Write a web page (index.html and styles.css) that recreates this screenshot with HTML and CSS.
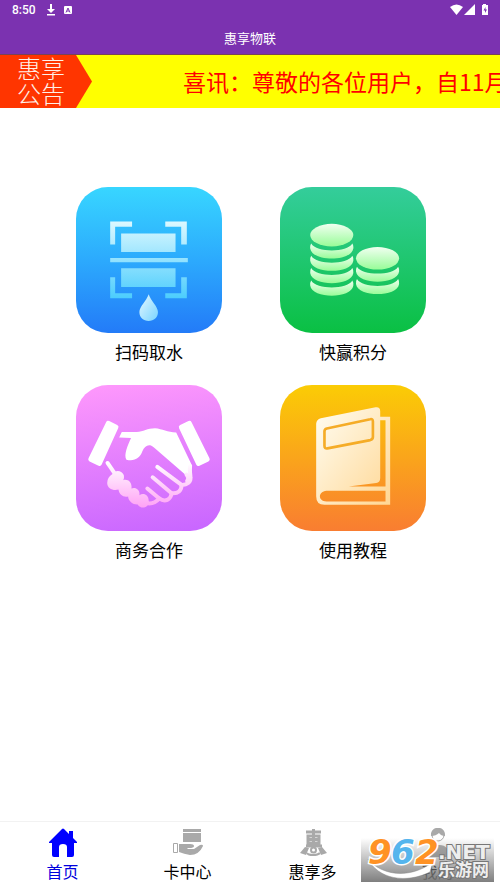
FILE: index.html
```html
<!DOCTYPE html>
<html lang="zh-CN">
<head>
  <meta charset="UTF-8" />
  <meta name="viewport" content="width=device-width, initial-scale=1.0" />
  <title>惠享物联</title>
  <link rel="stylesheet" href="styles.css">
</head>
<body>
  <header class="header">
    <div class="status-bar">
      <span class="clock">8:50</span>
      <svg class="status-icon" width="10" height="12" viewBox="0 0 10 12"><path d="M4 0h2v5h3L5 9 1 5h3zM1 10h8v1.500H1z" fill="#fff"/></svg>
      <svg class="status-icon" width="8" height="12" viewBox="0 0 8 12"><rect y="2" width="8" height="8" rx="1" fill="#fff"/><path d="M2 8.500L4 4l2 4.500M3 7h2" stroke="#7b32b0" fill="none"/></svg>
      <span class="spacer"></span>
      <svg width="38" height="12" viewBox="0 0 38 12" fill="#fff">
        <path d="M0 3Q6.500-2 13 3L6.500 11z"/>
        <path d="M25 0v11H14z"/>
        <path d="M33 0h3v1h2v10h-6V1h1z"/>
        <path d="M35.500 3L33.500 6.500h1.500V9l2-3.500h-1.500z" fill="#7b32b0"/>
      </svg>
    </div>
    <h1>惠享物联</h1>
  </header>

  <div class="notice">
    <div class="notice-tag">惠享<br>公告</div>
    <div class="notice-text">喜讯：尊敬的各位用户，自11月</div>
  </div>

  <main class="menu">
    <a class="menu-item" href="#scan">
      <svg class="tile blue" viewBox="17 19 440 440">
        <defs>
          <linearGradient id="scan" gradientUnits="userSpaceOnUse" x1="0" y1="123" x2="0" y2="354">
            <stop offset="0" stop-color="#dcf8ff"/><stop offset="1" stop-color="#4ccdfd"/>
          </linearGradient>
          <linearGradient id="drop" x1="0" y1="0" x2="1" y2="1">
            <stop offset="0" stop-color="#e6f8ff"/><stop offset="1" stop-color="#78d4ff"/>
          </linearGradient>
        </defs>
        <path fill="url(#scan)" d="M120 123h66v16h-51v53h-15zM286 123h65v69h-17v-53h-48zM120 291h15v48h51v15h-66zM334 291h17v63h-65v-15h48zM120 233h234v13H120zM153 159h164v56H153zM153 264h164v56H153z"/>
        <path fill="url(#drop)" d="M236 342C229 363 208 379 208 396C208 413 220 423 236 423S264 413 264 396C264 379 243 363 236 342z"/>
      </svg>
      <span>扫码取水</span>
    </a>

    <a class="menu-item" href="#points">
      <svg class="tile green" viewBox="28 19 440 440">
        <defs>
          <linearGradient id="coin" x1="0" y1="0" x2="0" y2="1">
            <stop offset="0" stop-color="#f0fff0"/><stop offset="1" stop-color="#98fc98"/>
          </linearGradient>
          <path id="rim" fill="url(#coin)" d="M122 189C138 217 230 217 246 189Q250 195 249 204C243 245 125 245 119 204Q118 195 122 189z"/>
        </defs>
        <ellipse cx="184" cy="164" rx="65" ry="34" fill="url(#coin)"/>
        <use href="#rim"/>
        <use href="#rim" y="37"/>
        <use href="#rim" y="74"/>
        <use href="#rim" y="112"/>
        <ellipse cx="322" cy="234" rx="65" ry="34" fill="url(#coin)"/>
        <use href="#rim" x="138" y="70"/>
        <use href="#rim" x="138" y="107"/>
      </svg>
      <span>快赢积分</span>
    </a>

    <a class="menu-item" href="#business">
      <svg class="tile pink" viewBox="17 20 440 440">
        <defs>
          <linearGradient id="hand" gradientUnits="userSpaceOnUse" x1="0" y1="255" x2="0" y2="395">
            <stop offset="0" stop-color="#fff"/><stop offset="1" stop-color="#ff9ef5"/>
          </linearGradient>
        </defs>
        <g fill="#fff" stroke="#fff" stroke-width="14" stroke-linejoin="round">
          <path d="M114 135L138 147 88 257 61 244z"/>
          <path d="M334 147L359 135 413 244 386 257z"/>
        </g>
        <path fill="#fff" d="M155 162H200C220 160 232 150 255 150C278 152 292 162 319 163L367 263Q366 285 352 295L252 208C236 195 224 204 217 220C210 240 192 252 169 245C160 232 173 201 183 180L147 178z"/>
        <g fill="none" stroke="url(#hand)" stroke-width="12" stroke-linecap="round" stroke-linejoin="round">
          <path d="M361 265C358 278 362 286 362 298C364 313 351 322 335 321C336 337 324 349 305 346C303 366 285 374 268 362C256 376 240 380 222 374"/>
          <path d="M350 290Q360 300 352 309"/>
          <path d="M262 267L335 321M248 298L305 346M232 332L268 362"/>
          <path d="M112 255L132 284"/>
        </g>
        <path fill="url(#hand)" d="M126 289C134 276 153 275 161 291Q163 302 159 307C174 302 187 314 184 332C197 326 211 337 208 352C221 343 236 352 236 368C241 388 213 398 203 380C189 381 175 371 174 356C160 360 147 350 145 335C129 340 111 331 111 315Q111 299 126 289z"/>
      </svg>
      <span>商务合作</span>
    </a>

    <a class="menu-item" href="#guide">
      <svg class="tile orange" viewBox="28 20 440 440">
        <defs>
          <linearGradient id="book" x1="0" y1="0" x2="1" y2="1">
            <stop offset="0" stop-color="#fffdf2"/><stop offset="1" stop-color="#ffd794"/>
          </linearGradient>
        </defs>
        <path fill="url(#book)" fill-rule="evenodd" d="M137 137Q138 123 151 120L316 87Q330 85 330 99V116H360V381H162Q137 381 137 355zM330 126V300Q330 313 318 315L235 326H346V126zM168 339C142 341 142 371 168 371H346V339z"/>
        <path fill="none" stroke="#f5ac27" stroke-width="8" stroke-linejoin="round" d="M169 151L300 123Q308 121 308 130V177Q308 184 300 186L171 211Q162 213 162 203V160Q162 153 169 151z"/>
      </svg>
      <span>使用教程</span>
    </a>
  </main>

  <nav class="tab-bar">
    <a class="tab active" href="#home">
      <svg width="30" height="30" viewBox="0 0 30 30"><path fill="#00f" d="M1 14L14 1Q15 0 16 1L21 6V3H25V10L29 14V15H26V27Q26 29 24 29H19V19Q19 16 15 16Q11 16 11 19V29H6Q4 29 4 27V15H1z"/></svg>
      <span>首页</span>
    </a>
    <a class="tab" href="#card">
      <svg width="32" height="30" viewBox="0 0 32 30">
        <path fill="#a9a9a9" d="M11 1h18v3H11zM11 5h18v9H11zM7 16H18Q22 16 22 18Q22 20 17 20H15L16 21H22L28 17Q31 16 31 18Q27 27 18 27Q12 26 7 24z"/>
        <path fill="none" stroke="#a9a9a9" d="M1.500 15.500h4v9h-4z"/>
      </svg>
      <span>卡中心</span>
    </a>
    <a class="tab" href="#more">
      <svg width="30" height="30" viewBox="0 0 30 30">
        <g fill="none" stroke="#a9a9a9" stroke-width="3">
          <path d="M8 4H23M10 8H21V15H10zM10 11.500H21M15.500 1V18M8 18H24"/>
          <circle cx="15.500" cy="22" r="2.500" stroke-width="2"/>
          <path stroke-width="2" d="M9 25Q10 27 15 27T22 25"/>
        </g>
        <path fill="#a9a9a9" d="M7 19L11 20 8 27 2 25zM24 19L20 20 23 27 29 25z"/>
      </svg>
      <span>惠享多</span>
    </a>
    <a class="tab" href="#mine">
      <svg width="30" height="30" viewBox="0 0 30 30">
        <path fill="#a9a9a9" d="M4 29Q4 18 15 17T26 29z"/>
        <circle cx="15" cy="7" r="6" fill="#fff" stroke="#a9a9a9"/>
        <path fill="#a9a9a9" d="M8 8C7-3 23-3 22 8Q18 8 16 5Q13 8 8 8z"/>
      </svg>
      <span>我的</span>
    </a>

    <div class="watermark">
      <svg width="133" height="44" viewBox="0 0 133 44">
        <path d="M7 21C20 37 48 42 72 24L69 34C45 46 17 41 7 21z" fill="#fff" stroke="#888" stroke-width=".5"/>
        <g class="mark-number">
          <text x="7" y="26" fill="#ff9224">9</text>
          <text x="30" y="26" fill="#55b5ed">6</text>
          <text x="54" y="26" fill="#ff9224">2</text>
        </g>
        <text class="mark-net" x="77" y="21">.NET</text>
        <text class="mark-name" x="77" y="38">乐游网</text>
      </svg>
    </div>
  </nav>
</body>
</html>
```
FILE: styles.css
```css
:root {
  --purple: #7b32b0;
  --font: Roboto, "Noto Sans CJK SC", sans-serif;
}

* {
  box-sizing: border-box;
}

body {
  margin: 0;
  min-height: 100vh;
  display: flex;
  flex-direction: column;
  font-family: "Noto Sans CJK SC", sans-serif;
  background-color: #fff;
  color: #000;
}

a {
  color: inherit;
  text-decoration: none;
}

svg {
  display: block;
}

.header {
  height: 55px;
  background-color: var(--purple);
  border-bottom: 1px solid #794256;
  color: #fff;
}

.status-bar {
  display: flex;
  align-items: center;
  height: 20px;
  padding: 0 12px;
}

.clock {
  font: 500 12px var(--font);
  margin-right: 10px;
}

.status-icon {
  margin-right: 8px;
}

.spacer {
  flex: 1;
}

h1 {
  margin: 8px 0 0;
  font-size: 13px;
  line-height: 20px;
  font-weight: 400;
  text-align: center;
}

.notice {
  display: flex;
  align-items: center;
  height: 53px;
  background-color: #ff0;
  overflow: hidden;
}

.notice-tag {
  flex: none;
  width: 92px;
  height: 53px;
  padding-left: 17px;
  background-color: #ff3500;
  clip-path: polygon(0 0, 76px 0, 100% 50%, 76px 100%, 0 100%);
  color: #fff0e8;
  font-size: 24px;
  font-weight: 300;
  line-height: 25px;
}

.notice-text {
  padding-left: 91px;
  color: #f00;
  font-size: 23px;
  line-height: 34px;
  padding-bottom: 2px;
  white-space: nowrap;
}

.menu {
  display: grid;
  grid-template-columns: 1fr 1fr;
  gap: 19px 0;
  padding: 79px 45px 0 47px;
}

.menu-item {
  display: flex;
  flex-direction: column;
  align-items: center;
  gap: 5px;
  font-size: 17px;
  line-height: 28px;
}

.tile {
  width: 146px;
  height: 146px;
  border-radius: 32px;
}

.blue {
  background: linear-gradient(#38d6ff, #2caafd 50%, #237bf8);
}

.green {
  background: linear-gradient(#34cd9b, #0ac043);
}

.pink {
  background: linear-gradient(172deg, #ff99fc, #c765ff);
}

.orange {
  background: linear-gradient(#fbcc05, #f97d31);
}

.tab-bar {
  position: relative;
  display: grid;
  grid-template-columns: repeat(4, 1fr);
  height: 67px;
  margin-top: auto;
  border-top: 1px solid #f2f2f2;
}

.tab {
  display: flex;
  flex-direction: column;
  align-items: center;
  padding-top: 6px;
  font-size: 16px;
  line-height: 26px;
}

.tab.active {
  color: #00d;
}

/* site badge lying over the last tab */
.watermark {
  position: absolute;
  right: 6px;
  bottom: 6px;
  background: linear-gradient(rgba(120, 120, 120, 0), rgba(120, 120, 120, 0.95));
}

.mark-number {
  font: italic 700 34px "DejaVu Sans", sans-serif;
  stroke: #fff;
  stroke-width: 3px;
  paint-order: stroke;
}

.mark-net,
.mark-name {
  fill: #eee;
  stroke: #777;
  stroke-width: 2px;
  paint-order: stroke;
}

.mark-net {
  font: 700 20px "DejaVu Sans", sans-serif;
}

.mark-name {
  font: 700 17px "Noto Sans CJK SC", sans-serif;
}
```
